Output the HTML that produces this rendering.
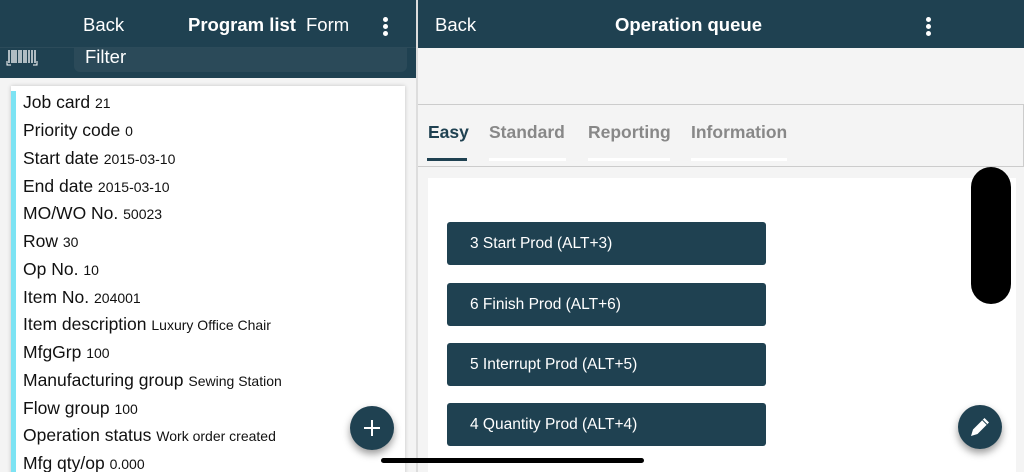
<!DOCTYPE html>
<html><head><style>
*{margin:0;padding:0;box-sizing:border-box}
html,body{width:1024px;height:472px;overflow:hidden}
body{background:#f4f4f4;font-family:"Liberation Sans",sans-serif;position:relative}
.a{position:absolute}
.hdr{background:#1f4151;color:#fff}
.dots{position:absolute;width:5px}
.dots i{display:block;width:5px;height:5px;border-radius:50%;background:#fff;margin-bottom:2px}
.row{position:absolute;left:23px;font-size:17.5px;color:#111;white-space:nowrap}
.row span{font-size:14px}
.btn{position:absolute;left:447px;width:319px;height:43px;background:#1f4151;border-radius:3px;color:#fff;font-size:15.5px;line-height:43px;padding-left:23px}
.tab{position:absolute;top:122px;font-size:17.5px;color:#888;font-weight:bold}
.ul{position:absolute;top:158px;height:3px;background:#fff}
.fab{position:absolute;width:44px;height:44px;border-radius:50%;background:#1f4151;box-shadow:0 4px 8px rgba(0,0,0,.4)}
.ht{position:absolute;top:14px;color:#fff;font-size:18.5px}
</style></head><body>
<div class="a hdr" style="left:0;top:0;width:416px;height:78px"></div>
<div class="ht" style="left:83px">Back</div>
<div class="ht" style="left:188px;font-weight:bold">Program list</div>
<div class="ht" style="left:306px">Form</div>
<div class="dots" style="left:383px;top:17px"><i></i><i></i><i></i></div>
<div class="a" style="left:0;top:47px;width:416px;height:1px;background:#2c4b5a"></div>
<div class="a" style="left:74px;top:48px;width:333px;height:24px;background:#2b4a59;border-radius:0 0 6px 6px"></div>
<div class="a" style="left:85px;top:46px;color:#fff;font-size:18.5px">Filter</div>
<svg class="a" style="left:6px;top:48px" width="32" height="20" viewBox="0 0 32 20" fill="none" stroke="#fff">
<path d="M3 2v13M6 2v13M8 2v13M10 2v13M13 2v13M15 2v13M18 2v13M20 2v13M23 2v13M26 2v13M29 2v13" stroke-width="1.3"/>
<path d="M1 13v4h4M31 13v4h-4" stroke-width="1"/></svg>
<div class="a" style="left:11px;top:86px;width:394px;height:400px;background:#fff;box-shadow:0 0 4px rgba(0,0,0,.2)"></div>
<div class="a" style="left:11px;top:91px;width:5px;height:390px;background:#7de3f3"></div>
<div class="row" style="top:92px">Job card <span>21</span></div>
<div class="row" style="top:120px">Priority code <span>0</span></div>
<div class="row" style="top:148px">Start date <span>2015-03-10</span></div>
<div class="row" style="top:176px">End date <span>2015-03-10</span></div>
<div class="row" style="top:203px">MO/WO No. <span>50023</span></div>
<div class="row" style="top:231px">Row <span>30</span></div>
<div class="row" style="top:259px">Op No. <span>10</span></div>
<div class="row" style="top:287px">Item No. <span>204001</span></div>
<div class="row" style="top:314px">Item description <span>Luxury Office Chair</span></div>
<div class="row" style="top:342px">MfgGrp <span>100</span></div>
<div class="row" style="top:370px">Manufacturing group <span>Sewing Station</span></div>
<div class="row" style="top:398px">Flow group <span>100</span></div>
<div class="row" style="top:425px">Operation status <span>Work order created</span></div>
<div class="row" style="top:453px">Mfg qty/op <span>0.000</span></div>
<div class="fab" style="left:350px;top:406px"><svg width="44" height="44"><path d="M22 14v16M14 22h16" stroke="#fff" stroke-width="2"/></svg></div>
<div class="a" style="left:416px;top:0;width:2px;height:472px;background:#ddd"></div>
<div class="a hdr" style="left:418px;top:0;width:606px;height:48px"></div>
<div class="ht" style="left:435px">Back</div>
<div class="ht" style="left:615px;font-weight:bold">Operation queue</div>
<div class="dots" style="left:926px;top:17px"><i></i><i></i><i></i></div>
<div class="a" style="left:418px;top:104px;width:606px;height:63px;border-top:1px solid #ccc;border-bottom:1px solid #ccc;border-right:1px solid #ccc"></div>
<div class="tab" style="left:428px;color:#1f4151">Easy</div>
<div class="tab" style="left:489px">Standard</div>
<div class="tab" style="left:588px">Reporting</div>
<div class="tab" style="left:691px">Information</div>
<div class="ul" style="left:427px;width:40px;background:#1f4151"></div>
<div class="ul" style="left:489px;width:77px"></div>
<div class="ul" style="left:588px;width:82px"></div>
<div class="ul" style="left:691px;width:96px"></div>
<div class="a" style="left:428px;top:178px;width:588px;height:300px;background:#fff"></div>
<div class="btn" style="top:222px">3 Start Prod (ALT+3)</div>
<div class="btn" style="top:283px">6 Finish Prod (ALT+6)</div>
<div class="btn" style="top:343px">5 Interrupt Prod (ALT+5)</div>
<div class="btn" style="top:403px">4 Quantity Prod (ALT+4)</div>
<div class="a" style="left:971px;top:167px;width:40px;height:137px;background:#000;border-radius:20px"></div>
<div class="fab" style="left:958px;top:405px"><svg width="44" height="44"><path d="M13 31l2-6.5 11.5-11.5 4.5 4.5-11.5 11.5z" fill="#fff"/><path d="M24.5 15l4.5 4.5" stroke="#1f4151" stroke-width="1"/></svg></div>
<div class="a" style="left:381px;top:458px;width:263px;height:5px;background:#000;border-radius:3px"></div>
</body></html>
